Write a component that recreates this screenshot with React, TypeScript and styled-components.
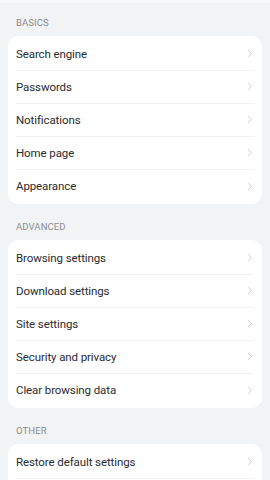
import styled, { createGlobalStyle } from 'styled-components';

const GlobalStyle = createGlobalStyle`
  html, body {
    margin: 0;
    padding: 0;
    background: #f2f3f5;
    font-family: Roboto, "Liberation Sans", Arial, sans-serif;
  }
`;

const Page = styled.div`
  width: 270px;
  height: 480px;
  overflow: hidden;
  background: #f2f3f5;
  box-shadow: inset 0 3px 0 #f9f9fa;
  box-sizing: border-box;
  padding: 0 8px;
`;

const SectionTitle = styled.div`
  height: 36px;
  padding: 17px 0 0 8px;
  box-sizing: border-box;
  font-size: 9.5px;
  line-height: 12px;
  color: #8c8d90;
  letter-spacing: 0.1px;
`;

const Card = styled.div`
  background: #ffffff;
  border-radius: 10px;
  padding: 1.5px 0;
`;

const Row = styled.div<{ $divider: boolean }>`
  height: 33px;
  margin: 0 8px;
  display: flex;
  align-items: center;
  justify-content: space-between;
  border-bottom: ${(p) => (p.$divider ? '1px solid #f0f0f2' : 'none')};
  box-sizing: border-box;
`;

const Label = styled.span`
  font-size: 11.5px;
  color: #2a2b2e;
  letter-spacing: -0.1px;
`;

const Chevron = styled.svg`
  width: 6px;
  height: 9px;
  margin-right: 1px;
`;

const sections = [
  {
    title: 'BASICS',
    items: ['Search engine', 'Passwords', 'Notifications', 'Home page', 'Appearance'],
    more: false,
  },
  {
    title: 'ADVANCED',
    items: [
      'Browsing settings',
      'Download settings',
      'Site settings',
      'Security and privacy',
      'Clear browsing data',
    ],
    more: false,
  },
  {
    title: 'OTHER',
    items: ['Restore default settings'],
    more: true,
  },
];

export default function App() {
  return (
    <>
      <GlobalStyle />
      <Page>
        {sections.map((s) => (
          <div key={s.title}>
            <SectionTitle>{s.title}</SectionTitle>
            <Card>
              {s.items.map((item, i) => (
                <Row key={item} $divider={s.more || i < s.items.length - 1}>
                  <Label>{item}</Label>
                  <Chevron viewBox="0 0 6 9">
                    <path d="M1 1l3.5 3.5L1 8" fill="none" stroke="#d2d3d6" strokeWidth="1" />
                  </Chevron>
                </Row>
              ))}
              {s.more && <Row $divider={false} />}
            </Card>
          </div>
        ))}
      </Page>
    </>
  );
}
